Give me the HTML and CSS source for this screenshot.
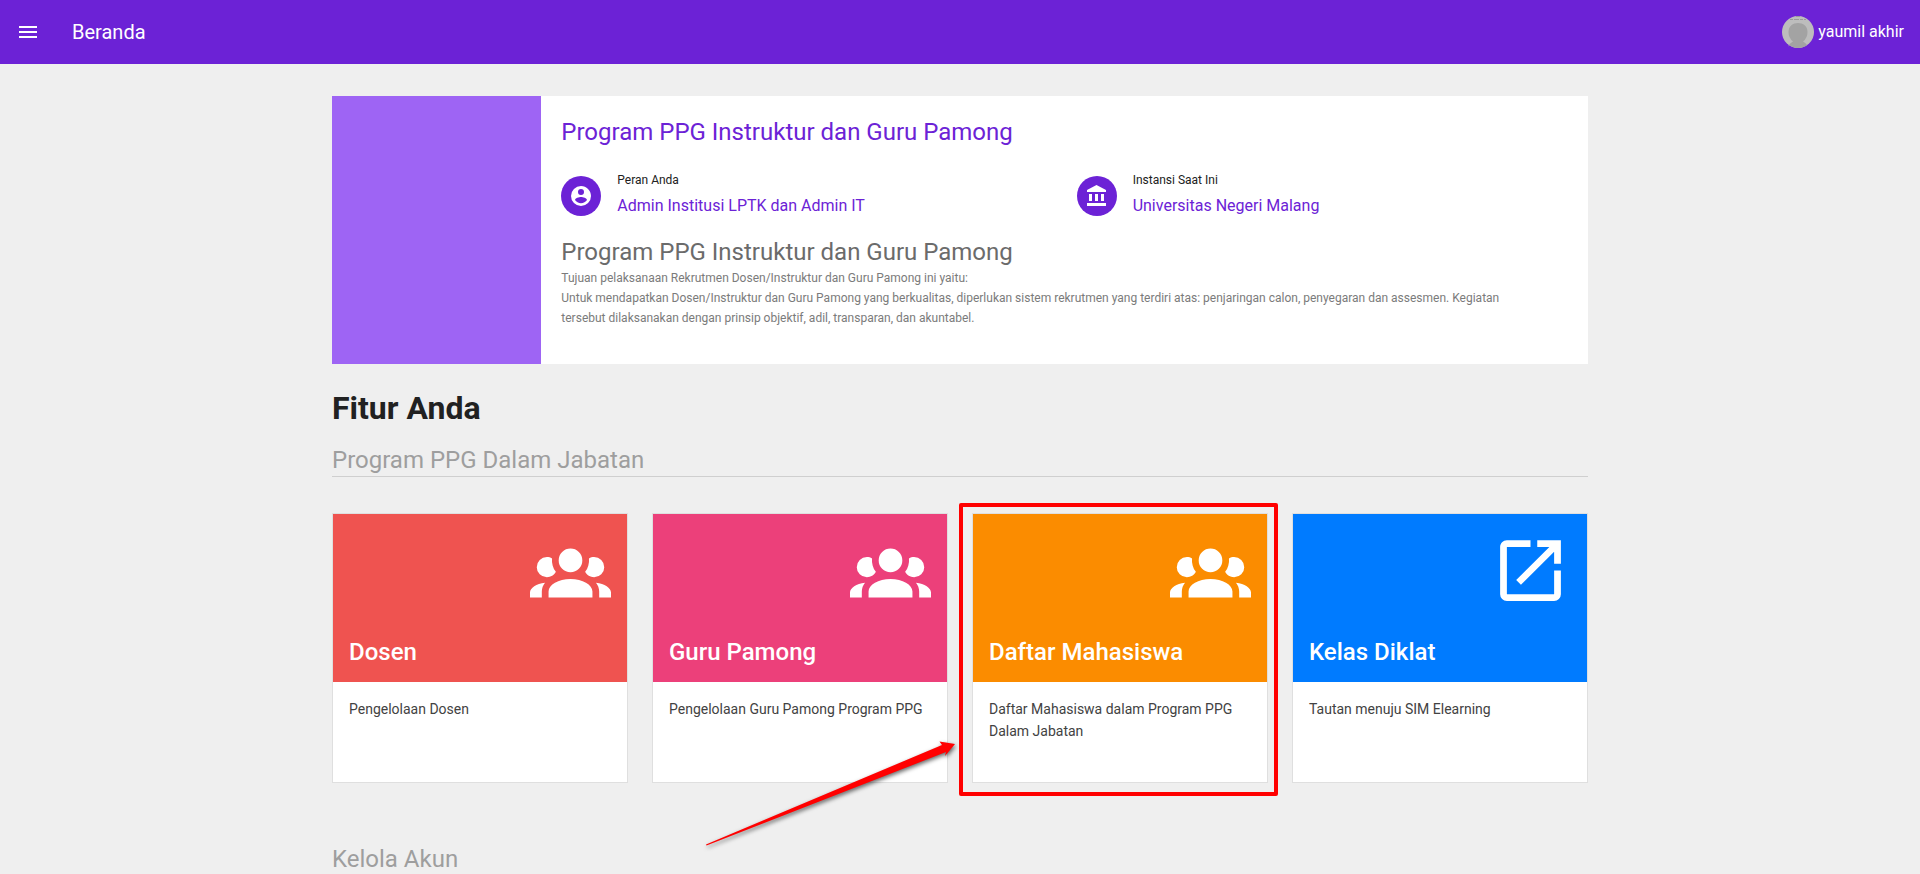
FILE: index.html
```html
<!DOCTYPE html>
<html lang="id">
<head>
<meta charset="utf-8">
<meta name="viewport" content="width=device-width, initial-scale=1">
<title>Beranda</title>
<link rel="stylesheet" href="styles.css">
</head>
<body>
<svg class="sprite" aria-hidden="true">
  <symbol id="icon-group" viewBox="0 0 24 24"><path d="M12,5.5A3.5,3.5 0 0,1 15.5,9A3.5,3.5 0 0,1 12,12.5A3.5,3.5 0 0,1 8.5,9A3.5,3.5 0 0,1 12,5.5M5,8C5.56,8 6.08,8.15 6.53,8.42C6.38,9.85 6.8,11.27 7.66,12.38C7.16,13.34 6.16,14 5,14A3,3 0 0,1 2,11A3,3 0 0,1 5,8M19,8A3,3 0 0,1 22,11A3,3 0 0,1 19,14C17.84,14 16.84,13.34 16.34,12.38C17.2,11.27 17.62,9.85 17.47,8.42C17.92,8.15 18.44,8 19,8M5.5,18.25C5.5,16.18 8.41,14.5 12,14.5C15.59,14.5 18.5,16.18 18.5,18.25V20H5.5V18.25M0,20V18.5C0,17.11 1.89,15.94 4.45,15.6C3.86,16.28 3.5,17.22 3.5,18.25V20H0M24,20H20.5V18.25C20.5,17.22 20.14,16.28 19.55,15.6C22.11,15.94 24,17.11 24,18.5V20Z"/></symbol>
</svg>

<header class="topbar">
  <button class="menu-button" type="button" aria-label="Menu">
    <svg viewBox="0 0 24 24"><path d="M3,6H21V8H3V6M3,11H21V13H3V11M3,16H21V18H3V16Z"/></svg>
  </button>
  <div class="topbar-title">Beranda</div>
  <button class="user" type="button">
    <svg class="avatar" viewBox="0 0 32 32" aria-hidden="true">
      <circle cx="16" cy="16" r="16" fill="#bdbdbd"/>
      <path d="M6.500,31L7,29Q8,27 11,25.500Q6.500,22 6.500,16C6.500,10 11,7 16,7S25.500,10 25.500,16Q25.500,22 21,25.500Q24,27 25,29L24,30Q20,32 16,32T6.500,29Z" fill="#a3a3a3"/>
      <path d="M8,3.500H24" stroke="#999" stroke-dasharray="3 1 5 1"/>
      <path d="M14,.5H18" stroke="#999"/>
    </svg>
    <span>yaumil akhir</span>
  </button>
</header>

<div class="scroller">
<main class="page">
  <section class="program">
    <div class="program-cover"></div>
    <div class="program-body">
      <h2 class="program-title">Program PPG Instruktur dan Guru Pamong</h2>
      <div class="facts">
        <div class="fact">
          <span class="fact-icon"><svg viewBox="0 0 24 24"><path d="M12,19.200C9.500,19.200 7.290,17.920 6,16C6.030,14 10,12.900 12,12.900C14,12.900 17.970,14 18,16C16.710,17.920 14.500,19.200 12,19.200M12,5A3,3 0 0,1 15,8A3,3 0 0,1 12,11A3,3 0 0,1 9,8A3,3 0 0,1 12,5M12,2A10,10 0 0,0 2,12A10,10 0 0,0 12,22A10,10 0 0,0 22,12C22,6.470 17.500,2 12,2Z"/></svg></span>
          <div>
            <div class="fact-label">Peran Anda</div>
            <div class="fact-value">Admin Institusi LPTK dan Admin IT</div>
          </div>
        </div>
        <div class="fact">
          <span class="fact-icon"><svg viewBox="0 0 24 24"><path d="M11.500,1L2,6V8H21V6M16,10V17H19V10M2,22H21V19H2M10,10V17H13V10M4,10V17H7V10H4Z"/></svg></span>
          <div>
            <div class="fact-label">Instansi Saat Ini</div>
            <div class="fact-value">Universitas Negeri Malang</div>
          </div>
        </div>
      </div>
      <h3 class="about-title">Program PPG Instruktur dan Guru Pamong</h3>
      <p class="about-text">Tujuan pelaksanaan Rekrutmen Dosen/Instruktur dan Guru Pamong ini yaitu:<br>Untuk mendapatkan Dosen/Instruktur dan Guru Pamong yang berkualitas, diperlukan sistem rekrutmen yang terdiri atas: penjaringan calon, penyegaran dan assesmen. Kegiatan tersebut dilaksanakan dengan prinsip objektif, adil, transparan, dan akuntabel.</p>
    </div>
  </section>

  <h1 class="page-title">Fitur Anda</h1>

  <section class="group">
    <h2 class="group-title">Program PPG Dalam Jabatan</h2>
    <div class="cards">
      <a class="card" href="#dosen">
        <div class="card-head red">
          <svg class="card-icon"><use href="#icon-group"/></svg>
          <h3 class="card-title">Dosen</h3>
        </div>
        <p class="card-text">Pengelolaan Dosen</p>
      </a>
      <a class="card" href="#guru-pamong">
        <div class="card-head pink">
          <svg class="card-icon"><use href="#icon-group"/></svg>
          <h3 class="card-title">Guru Pamong</h3>
        </div>
        <p class="card-text">Pengelolaan Guru Pamong Program PPG</p>
      </a>
      <a class="card marked" href="#mahasiswa">
        <div class="card-head orange">
          <svg class="card-icon"><use href="#icon-group"/></svg>
          <h3 class="card-title">Daftar Mahasiswa</h3>
        </div>
        <p class="card-text">Daftar Mahasiswa dalam Program PPG Dalam Jabatan</p>
        <svg class="arrow" viewBox="0 0 260 116" aria-hidden="true">
          <path d="M3,104.500L239,5L236.500,1.500L252,4L242,16L243,12L3.500,105.500Z"/>
        </svg>
      </a>
      <a class="card" href="#kelas-diklat">
        <div class="card-head blue">
          <svg class="card-icon" viewBox="0 0 24 24"><path d="M14,3V5H17.590L7.760,14.830L9.170,16.240L19,6.410V10H21V3M19,19H5V5H12V3H5C3.890,3 3,3.900 3,5V19A2,2 0 0,0 5,21H19A2,2 0 0,0 21,19V12H19V19Z"/></svg>
          <h3 class="card-title">Kelas Diklat</h3>
        </div>
        <p class="card-text">Tautan menuju SIM Elearning</p>
      </a>
    </div>
  </section>

  <section class="group">
    <h2 class="group-title">Kelola Akun</h2>
  </section>
</main>
</div>
</body>
</html>
```
FILE: styles.css
```css
* { box-sizing: border-box; }

body {
  display: flex;
  flex-direction: column;
  height: 100vh;
  margin: 0;
  background: #efefef;
  color: #212121;
  font-family: Roboto, "Liberation Sans", sans-serif;
  font-size: 16px;
}

h1, h2, h3, p { margin: 0; font-weight: 400; }
button { border: 0; padding: 0; background: none; color: inherit; font: inherit; cursor: pointer; }
svg { display: block; fill: currentColor; }
.sprite { position: absolute; width: 0; height: 0; }

/* Top bar */
.topbar {
  display: flex;
  flex-shrink: 0;
  align-items: center;
  height: 64px;
  padding: 0 16px;
  background: #6c22d6;
  color: #fff;
}
.menu-button svg { width: 24px; height: 24px; }
.topbar-title { flex: 1; margin-left: 32px; font-size: 20px; line-height: 28px; }
.user { display: flex; align-items: center; gap: 4px; line-height: 24px; }
.avatar { width: 32px; height: 32px; }

.scroller { flex: 1; min-height: 0; overflow-y: auto; scrollbar-width: none; }
.page { max-width: 1280px; margin: 0 auto; padding: 32px 12px 0; }

/* Program summary */
.program { display: grid; grid-template-columns: 1fr 5fr; background: #fff; }
.program-cover { background: #9e64f4; }
.program-body { padding: 20px 20px 36px; }
.program-title, .about-title { font-size: 24px; line-height: 32px; }
.program-title { color: #6c22d6; }
.about-title { margin-top: 14px; color: #6b6b6b; }
.about-text { max-width: 960px; color: #7b7b7b; font-size: 12px; line-height: 20px; }

.facts { display: grid; grid-template-columns: 1fr 1fr; gap: 24px; margin-top: 22px; }
.fact { display: flex; align-items: center; gap: 16px; }
.fact-icon {
  display: grid;
  place-items: center;
  width: 40px;
  height: 40px;
  border-radius: 50%;
  background: #6c22d6;
  color: #fff;
}
.fact-icon svg { width: 24px; height: 24px; }
.fact-label { font-size: 12px; line-height: 20px; }
.fact-value { color: #6c22d6; line-height: 32px; }

/* Feature groups */
.page-title { margin-top: 24px; font-size: 32px; font-weight: 700; line-height: 40px; }
.group { margin-top: 60px; }
.page-title + .group { margin-top: 16px; }
.group-title {
  border-bottom: 1px solid #cfcfcf;
  color: #9e9e9e;
  font-size: 24px;
  line-height: 32px;
}

.cards { display: grid; grid-template-columns: repeat(4, 1fr); gap: 24px; margin-top: 36px; }
.card {
  position: relative;
  border: 1px solid #dfdfdf;
  background: #fff;
  color: #424242;
  text-decoration: none;
}
.card-head {
  display: flex;
  flex-direction: column;
  justify-content: space-between;
  min-height: 168px;
  padding: 16px;
  color: #fff;
}
.card-icon { width: 81px; height: 81px; margin-left: auto; }
.card-title { font-size: 24px; font-weight: 500; line-height: 28px; }
.card-text { min-height: 100px; padding: 16px; font-size: 14px; line-height: 22px; }

.red { background: #ef5350; }
.pink { background: #ec407a; }
.orange { background: #fb8c00; }
.blue { background: #007bff; }

/* Annotation over the marked card */
.marked::after {
  content: "";
  position: absolute;
  inset: -11px -11px -14px -14px;
  border: 4px solid #f00;
  border-radius: 2px;
}
.arrow {
  position: absolute;
  right: 100%;
  top: 226px;
  width: 260px;
  height: 116px;
  margin-right: 10px;
  fill: #f00;
  overflow: visible;
  filter: drop-shadow(1px 2px 2px rgba(0, 0, 0, .6));
  pointer-events: none;
}
```
